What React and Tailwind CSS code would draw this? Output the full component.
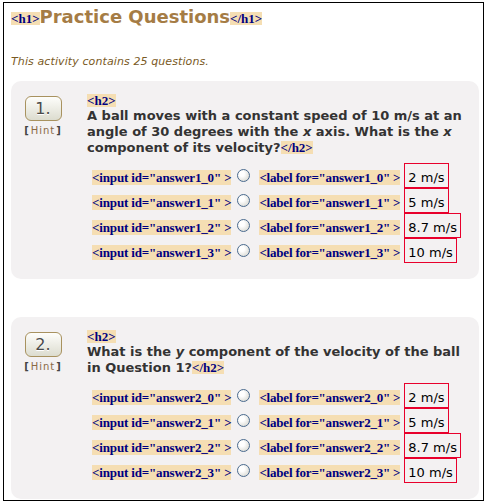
import React from "react";

// --- Sub-Components ---
const Tag = ({ children, className = "" }) => (
    <span className={"inline-block bg-[#f5deb3] font-['Liberation_Serif',serif] font-bold text-[13px] leading-[13px] text-[#000080] whitespace-pre " + className}>
        {children}
    </span>
);

const Radio = () => (
    <span className="self-center ml-[6px] w-[13px] h-[13px] rounded-full border border-[#4a6a8e] bg-[radial-gradient(circle_at_35%_35%,#ffffff_25%,#cfcfc7)] shrink-0" />
);

const AnswerRow = ({ id, value }) => (
    <div className="flex items-baseline h-[25px]">
        <Tag className="ml-[5px] leading-[15px] tracking-[-0.15px]">{`<input id="${id}" >`}</Tag>
        <Radio />
        <Tag className="ml-[9px] leading-[15px] tracking-[-0.2px]">{`<label for="${id}" >`}</Tag>
        <span className="ml-[4px] h-[25px] border border-[#e8002c] pl-[3px] pr-[3px] pt-[6px] pb-[1px] text-[13px] leading-[16px] text-black whitespace-nowrap">
            {value}
        </span>
    </div>
);

const QuestionCard = ({ num, qid, children, className = "" }) => (
    <div className={"rounded-[10px] bg-[#f3f1f2] flex pt-[11px] pb-4 pl-[13px] pr-[10px] " + className}>
        <div className="w-[38px] shrink-0 pt-[4px] flex flex-col items-center">
            <div className="w-[37px] h-[25px] rounded-[6px] border border-[#a8925f] bg-gradient-to-b from-[#fefefb] to-[#dcdccf] flex items-center justify-center text-[16px] leading-none text-[#4a4a4a] [text-shadow:0_1px_0_#fff]">
                {num}.
            </div>
            <div className="mt-[3px] text-[10px] leading-[14px] text-[#444] tracking-[1px] font-bold">
                [<span className="text-[#8a6a45] font-normal mx-[1px]">Hint</span>]
            </div>
        </div>
        <div className="ml-[25px] flex-1">
            <div className="leading-[16px]">
                <Tag>{"<h2>"}</Tag>
            </div>
            <p className="text-[13px] leading-[16px] font-bold text-[#333]">
                {children}
                <Tag>{"</h2>"}</Tag>
            </p>
            <div className="mt-[7px]">
                {["2 m/s", "5 m/s", "8.7 m/s", "10 m/s"].map((v, i) => (
                    <AnswerRow key={i} id={`answer${qid}_${i}`} value={v} />
                ))}
            </div>
        </div>
    </div>
);

const App = () => {
    return (
        <div className="bg-white min-h-[504px] pt-[2px] px-[3px] font-['DejaVu_Sans',sans-serif]">
            <div className="border border-black pl-[7px] pr-[4px] pb-[1px]">
                {/* Title */}
                <div className="pt-[3px] leading-[21px]">
                    <Tag>{"<h1>"}</Tag>
                    <span className="text-[18px] font-bold text-[#a57c45]">Practice Questions</span>
                    <Tag>{"</h1>"}</Tag>
                </div>
                <p className="mt-[27px] text-[11px] leading-[13px] italic text-[#7a5a25] tracking-[0.1px]">
                    This activity contains 25 questions.
                </p>

                {/* Questions */}
                <QuestionCard num={1} qid={1} className="mt-[13px]">
                    A ball moves with a constant speed of 10 m/s at an angle of 30 degrees with the <i>x</i> axis. What is the <i>x</i> component of its velocity?
                </QuestionCard>
                <QuestionCard num={2} qid={2} className="mt-[38px]">
                    What is the <i>y</i> component of the velocity of the ball in Question 1?
                </QuestionCard>
            </div>
        </div>
    );
};

export default App;
